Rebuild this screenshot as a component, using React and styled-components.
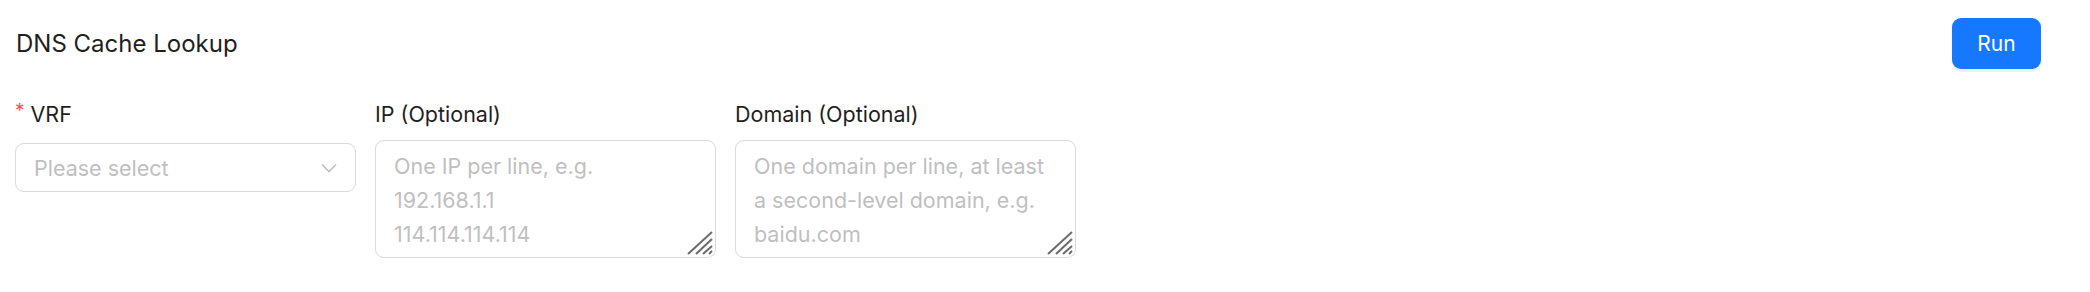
import React from "react";
import styled, { createGlobalStyle } from "styled-components";

const GlobalStyle = createGlobalStyle`
  body {
    margin: 0;
    background: #ffffff;
    font-family: Inter, "Noto Sans", "Liberation Sans", sans-serif;
  }
`;

const Page = styled.div`
  padding: 18px 49px 0 15px;
`;

const Header = styled.div`
  display: flex;
  justify-content: space-between;
  align-items: center;
  height: 51px;
`;

const Title = styled.h1`
  margin: 0 0 0 1px;
  font-size: 24px;
  font-weight: 400;
  color: #1f1f1f;
`;

const RunButton = styled.button`
  width: 89px;
  height: 51px;
  border: none;
  border-radius: 9px;
  background: #1677ff;
  color: #ffffff;
  font-family: inherit;
  font-size: 21px;
  box-shadow: 0 3px 0 rgba(5, 145, 255, 0.1);
  cursor: pointer;
`;

const FormRow = styled.div`
  display: flex;
  gap: 19px;
  margin-top: 28px;
`;

const Field = styled.div`
  width: 341px;
  display: flex;
  flex-direction: column;
`;

const Label = styled.label`
  display: flex;
  align-items: center;
  height: 34px;
  margin-bottom: ${(p) => p.$gap}px;
  font-size: 21.5px;
  color: #1f1f1f;
`;

const Required = styled.span`
  color: #ff4d4f;
  font-size: 19px;
  margin-right: 6px;
  align-self: flex-start;
  margin-top: 2px;
`;

const SelectBox = styled.div`
  box-sizing: border-box;
  height: 49px;
  border: 1.5px solid #d9d9d9;
  border-radius: 9px;
  display: flex;
  align-items: center;
  justify-content: space-between;
  padding: 0 18px 0 18px;
  font-size: 21.5px;
  color: #bfbfbf;
`;

const TextWrap = styled.div`
  position: relative;
`;

const TextArea = styled.textarea`
  box-sizing: border-box;
  display: block;
  width: 100%;
  height: 118px;
  border: 1.5px solid #d9d9d9;
  border-radius: 9px;
  padding: 8px 22px 8px 18px;
  font-family: inherit;
  font-size: 21.5px;
  line-height: 34px;
  color: #1f1f1f;
  resize: none;
  outline: none;
  overflow: hidden;

  &::placeholder {
    color: #bfbfbf;
  }
`;

const Grip = styled.svg`
  position: absolute;
  right: 3px;
  bottom: 3px;
  pointer-events: none;
`;

const Chevron = () => (
  <svg width="16" height="10" viewBox="0 0 16 10" fill="none">
    <path d="M1 1.5 L8 8.5 L15 1.5" stroke="#bfbfbf" strokeWidth="1.6" />
  </svg>
);

const ResizeGrip = () => (
  <Grip width="26" height="24" viewBox="0 0 26 24">
    <g stroke="#6b6b6b" strokeWidth="2">
      <line x1="1" y1="23" x2="25" y2="1" />
      <line x1="9" y1="23" x2="25" y2="8" />
      <line x1="16" y1="23" x2="25" y2="15" />
      <line x1="22" y1="23" x2="25" y2="20" />
    </g>
  </Grip>
);

const App = () => {
  return (
    <>
      <GlobalStyle />
      <Page>
        <Header>
          <Title>DNS Cache Lookup</Title>
          <RunButton>Run</RunButton>
        </Header>
        <FormRow>
          <Field>
            <Label $gap={12}>
              <Required>*</Required>VRF
            </Label>
            <SelectBox>
              <span>Please select</span>
              <Chevron />
            </SelectBox>
          </Field>
          <Field>
            <Label $gap={9}>IP (Optional)</Label>
            <TextWrap>
              <TextArea
                placeholder={"One IP per line, e.g.\n192.168.1.1\n114.114.114.114"}
              />
              <ResizeGrip />
            </TextWrap>
          </Field>
          <Field>
            <Label $gap={9}>Domain (Optional)</Label>
            <TextWrap>
              <TextArea placeholder="One domain per line, at least a second-level domain, e.g. baidu.com" />
              <ResizeGrip />
            </TextWrap>
          </Field>
        </FormRow>
      </Page>
    </>
  );
};

export default App;
